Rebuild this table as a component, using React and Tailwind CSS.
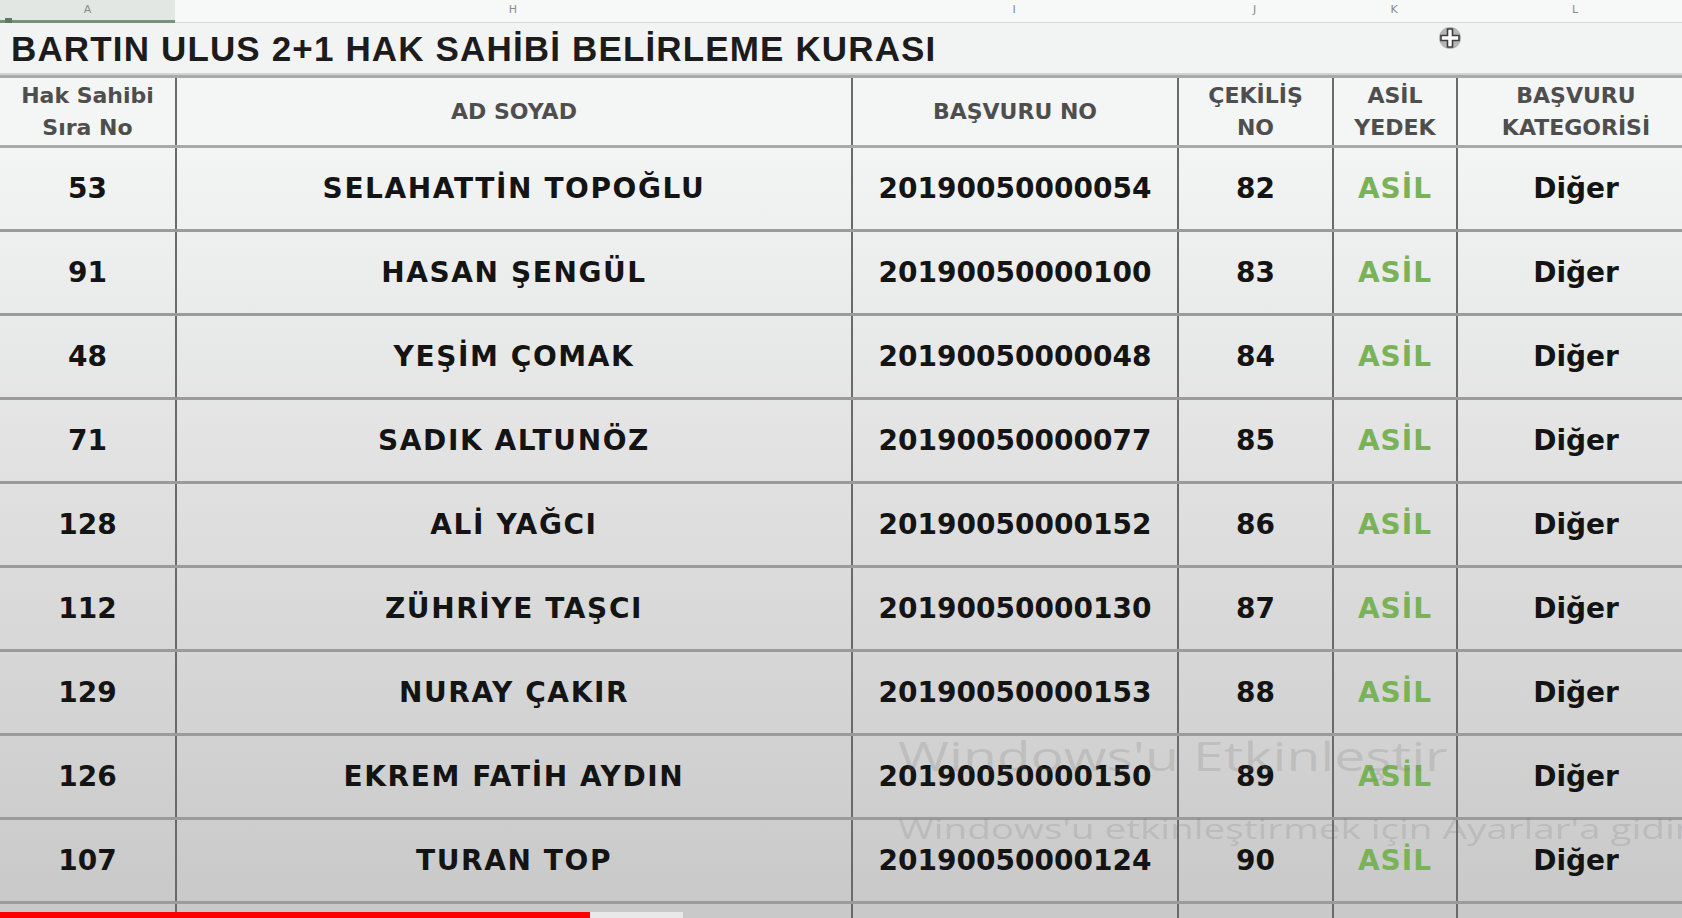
import React from 'react';

const rows = [
  ['53', 'SELAHATTİN TOPOĞLU', '20190050000054', '82'],
  ['91', 'HASAN ŞENGÜL', '20190050000100', '83'],
  ['48', 'YEŞİM ÇOMAK', '20190050000048', '84'],
  ['71', 'SADIK ALTUNÖZ', '20190050000077', '85'],
  ['128', 'ALİ YAĞCI', '20190050000152', '86'],
  ['112', 'ZÜHRİYE TAŞCI', '20190050000130', '87'],
  ['129', 'NURAY ÇAKIR', '20190050000153', '88'],
  ['126', 'EKREM FATİH AYDIN', '20190050000150', '89'],
  ['107', 'TURAN TOP', '20190050000124', '90'],
];

const cols = 'grid grid-cols-[175px_676px_326px_155px_124px_238px]';
const cell = 'flex items-center justify-center border-l-2 border-[#6a6a6a]';

const CrossCursor = () => (
  <svg width="26" height="26" viewBox="0 0 26 26">
    <circle cx="13" cy="13" r="11" fill="#6a6a6a" opacity="0.45" />
    <path
      d="M10.5 4h5v6.5H22v5h-6.5V22h-5v-6.5H4v-5h6.5z"
      fill="#ffffff"
      stroke="#3e3e3e"
      strokeWidth="1.6"
    />
  </svg>
);

export default function App() {
  return (
    <div className="relative w-[1682px] h-[918px] overflow-hidden bg-[#d6d6d6] font-['DejaVu_Sans',sans-serif]">
      <div className="w-[1694px]">
        {/* column letters */}
        <div className={`${cols} h-[23px] text-[11px] text-[#8a8a8a]`}>
          <div className="relative flex items-start justify-center pt-[2px] bg-[#e3e7e3] border-b-[3px] border-[#74937a]">
            A
            <span className="absolute left-[5px] bottom-[-5px] w-[7px] h-[7px] bg-[#5d7a62]" />
          </div>
          {['H', 'I', 'J', 'K', 'L'].map((l) => (
            <div key={l} className="flex items-start justify-center pt-[2px] bg-[#f7f8f8] border-b border-[#d9d9d9]">
              {l}
            </div>
          ))}
        </div>

        {/* title */}
        <div className="relative h-[52px] bg-[#f2f3f3] border-b-2 border-[#d4d4d4] flex items-center pl-[11px] pt-[3px]">
          <span className="font-['Liberation_Sans',sans-serif] font-bold text-[35px] text-[#1c1c1c] tracking-[1.15px]">
            BARTIN ULUS 2+1 HAK SAHİBİ BELİRLEME KURASI
          </span>
          <span className="absolute left-[1437px] top-[2px]">
            <CrossCursor />
          </span>
        </div>

        {/* header */}
        <div className={`${cols} h-[73px] bg-[#f4f5f5] border-t-[3px] border-b-[3px] border-[#a9a9a9] font-bold text-[22px] leading-[32px] text-[#4e4e4e] text-center`}>
          <div className="flex items-center justify-center">
            <span>Hak Sahibi<br />Sıra No</span>
          </div>
          <div className={cell}>AD SOYAD</div>
          <div className={cell}>BAŞVURU NO</div>
          <div className={cell}>
            <span>ÇEKİLİŞ<br />NO</span>
          </div>
          <div className={cell}>
            <span>ASİL<br />YEDEK</span>
          </div>
          <div className={cell}>
            <span>BAŞVURU<br />KATEGORİSİ</span>
          </div>
        </div>

        {/* rows */}
        <div className="bg-gradient-to-b from-[#f3f4f4] via-[#dedede] to-[#c9c9c9]">
          {rows.map((r) => (
            <div key={r[2]} className={`${cols} h-[84px] border-b-[3px] border-[#9b9b9b] font-bold text-[28px] text-[#141414]`}>
              <div className="flex items-center justify-center">{r[0]}</div>
              <div className={`${cell} tracking-[1.6px]`}>{r[1]}</div>
              <div className={cell}>{r[2]}</div>
              <div className={cell}>{r[3]}</div>
              <div className={`${cell} text-[#79b257] tracking-[1px]`}>ASİL</div>
              <div className={cell}>Diğer</div>
            </div>
          ))}
        </div>
        <div className={`${cols} h-[20px] bg-[#c9c9c9]`}>
          <div />
          <div className="border-l-2 border-[#6a6a6a]" />
          <div className="border-l-2 border-[#6a6a6a]" />
          <div className="border-l-2 border-[#6a6a6a]" />
          <div className="border-l-2 border-[#6a6a6a]" />
          <div className="border-l-2 border-[#6a6a6a]" />
        </div>
      </div>

      {/* windows watermark */}
      <div className="pointer-events-none absolute left-[898px] top-[732px] font-['Open_Sans',sans-serif] text-[rgba(110,110,110,0.2)] origin-left scale-x-[1.38] whitespace-nowrap">
        <div className="text-[40px] leading-[48px]">Windows'u Etkinleştir</div>
        <div className="text-[28px] leading-[36px] mt-[30px]">Windows'u etkinleştirmek için Ayarlar'a gidin.</div>
      </div>

      {/* video progress */}
      <div className="absolute left-0 bottom-0 flex h-[6px]">
        <div className="w-[590px] bg-[#ff0000]" />
        <div className="w-[93px] bg-[#e9e9e9]" />
      </div>
    </div>
  );
}
